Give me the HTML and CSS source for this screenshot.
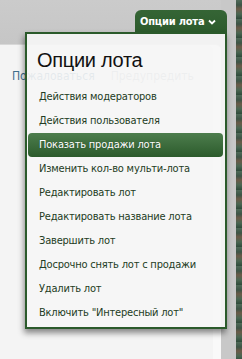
FILE: index.html
```html
<!DOCTYPE html>
<html>
<head>
    <title>Опции лота</title>
    <link rel="stylesheet" href="styles.css">
</head>
<body>
    <div class="page">
        <div class="main">
            <div class="topbar">
                <button class="options-btn">Опции лота
                    <svg class="chev" width="8" height="6" viewBox="0 0 8 6"><path d="M1 1.5 L4 4.5 L7 1.5" fill="none" stroke="#fff" stroke-width="1.8"/></svg>
                </button>
            </div>
            <div class="content">
                <div class="links">
                    <a class="lnk">Пожаловаться</a>
                    <a class="lnk dim">Предупредить</a>
                </div>
            </div>

            <div class="dropdown">
                <div class="dd-title">Опции лота</div>
                <ul class="dd-list">
                    <li>Действия модераторов</li>
                    <li>Действия пользователя</li>
                    <li class="active">Показать продажи лота</li>
                    <li>Изменить кол-во мульти-лота</li>
                    <li>Редактировать лот</li>
                    <li>Редактировать название лота</li>
                    <li>Завершить лот</li>
                    <li>Досрочно снять лот с продажи</li>
                    <li>Удалить лот</li>
                    <li>Включить "Интересный лот"</li>
                </ul>
            </div>
        </div>
        <div class="gutter"></div>
        <div class="texture"></div>
    </div>
</body>
</html>
```

FILE: styles.css
```css
body {
    margin: 0;
    font-family: "DejaVu Sans Condensed", "DejaVu Sans", sans-serif;
    background-color: #c9c9c9;
    overflow: hidden;
}

.page {
    display: flex;
    height: 359px;
    width: 242px;
}

.main {
    position: relative;
    width: 221px;
    display: flex;
    flex-direction: column;
}

.topbar {
    height: 44px;
    background: linear-gradient(#cbcbcb, #c6c6c6);
}

.content {
    flex: 1;
    background-color: #f4f4f4;
    border-top: 1px solid #d8d8d8;
    border-top-right-radius: 6px;
    box-shadow: inset -8px 0 0 #f9f9f9;
}

.links {
    display: flex;
    gap: 16px;
    padding: 24px 0 0 12px;
    font-size: 12px;
}
.lnk {
    color: #3f6f8c;
}
.lnk.dim {
    color: #9aa4aa;
}

.gutter {
    width: 15px;
    background-color: #c8c8c8;
}

.texture {
    flex: 1;
    background:
        repeating-linear-gradient(180deg, #4f6a58 0, #3d5446 5px, #6a5a48 9px, #4a6652 14px, #2f4a3a 19px),
        #4a5a50;
}

.options-btn {
    position: absolute;
    top: 10px;
    left: 135px;
    width: 92px;
    height: 23px;
    padding: 0 0 0 5px;
    border: none;
    border-radius: 6px 6px 0 0;
    background: linear-gradient(#356535, #2c5a2c);
    color: #fff;
    font-family: "DejaVu Sans Condensed", "DejaVu Sans", sans-serif;
    font-weight: bold;
    font-size: 11px;
    letter-spacing: -0.2px;
    text-align: left;
    display: flex;
    align-items: center;
    gap: 4px;
}
.chev {
    margin-top: 1px;
}

.dropdown {
    position: absolute;
    top: 32px;
    left: 25px;
    width: 198px;
    height: 293px;
    border: 2px solid #2b5a2b;
    background-color: rgba(246, 246, 246, 0.9);
    box-shadow: -1px 4px 6px rgba(0, 0, 0, 0.45);
}

.dd-title {
    font-family: "Liberation Sans", Arial, sans-serif;
    font-size: 20px;
    letter-spacing: -0.3px;
    color: #111;
    padding: 15px 0 0 10px;
    height: 36px;
}

.dd-list {
    list-style: none;
    margin: 0;
    padding: 0 2px 0 1px;
}
.dd-list li {
    height: 24px;
    line-height: 24px;
    padding-left: 11px;
    font-size: 11px;
    color: #233c23;
    letter-spacing: -0.2px;
    border-radius: 4px;
    white-space: nowrap;
}
.dd-list li.active {
    background: linear-gradient(#4d7d4d, #2c5b2c);
    color: #fff;
    text-shadow: 0 0 1px rgba(0, 0, 0, 0.4);
}
```
